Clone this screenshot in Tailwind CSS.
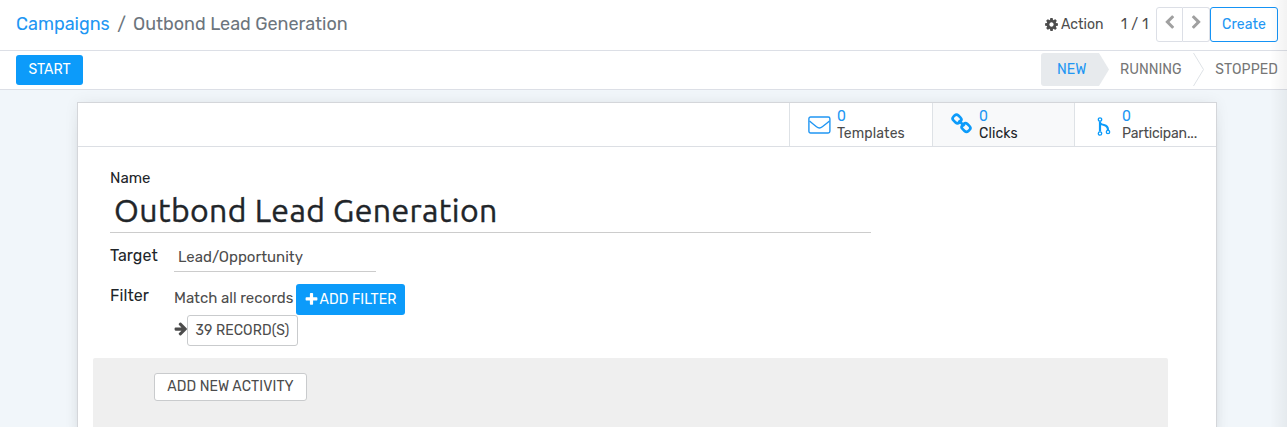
<!DOCTYPE html>
<html lang="en"><head><meta charset="utf-8"><title>Campaigns</title>
<script src="https://cdn.jsdelivr.net/npm/@tailwindcss/browser@4"></script></head>
<body class="w-[1287px] h-[427px] overflow-hidden bg-[#f1f6fa] font-[Rubik,Roboto,sans-serif] text-[14px] leading-[21px] text-[#4c4c4c] flex flex-col relative">
<header class="h-[51px] shrink-0 bg-white border-b border-[#dcdfe6] flex items-start justify-between pl-4 pr-[9px]">
  <nav class="flex text-[18px] leading-[27px] pt-[11px] text-[#6c757d]"><a class="text-[#2196f3] w-[94px] whitespace-nowrap">Campaigns</a><span class="w-[23px] text-center">/</span><span class="whitespace-nowrap">Outbond Lead Generation</span></nav>
  <div class="flex pt-[7px] h-[42px] items-stretch whitespace-nowrap">
    <div class="flex items-center w-[76px] gap-[2px]"><svg class="size-[15px]" viewBox="0 0 1792 1792" fill="currentColor"><path d="M1152 896q0-106-75-181t-181-75-181 75-75 181 75 181 181 75 181-75 75-181zm512-109v222q0 12-8 23t-20 13l-185 28q-19 54-39 91 35 50 107 138 10 12 10 25t-9 23q-27 37-99 108t-94 71q-12 0-26-9l-138-108q-44 23-91 38-16 136-29 186-7 28-36 28h-222q-14 0-24.5-8.5t-11.5-21.5l-28-184q-49-16-90-37l-141 107q-10 9-25 9-14 0-25-11-126-114-165-168-7-10-7-23 0-12 8-23 15-21 51-66.5t54-70.5q-27-50-41-99l-183-27q-13-2-21-12.5t-8-23.5v-222q0-12 8-23t19-13l186-28q14-46 39-92-40-57-107-138-10-12-10-24 0-10 9-23 26-36 98.5-107.5t94.5-71.5q13 0 26 10l138 107q44-23 91-38 16-136 29-186 7-28 36-28h222q14 0 24.5 8.5t11.5 21.5l28 184q49 16 90 37l142-107q9-9 24-9 13 0 25 10 129 119 165 170 7 8 7 22 0 12-8 23-15 21-51 66.5t-54 70.5q26 50 41 98l183 28q13 2 21 12.5t8 23.5z"/></svg><span>Action</span></div>
    <div class="flex items-center w-[36px] pl-px tracking-[0.4px]">1 / 1</div>
    <div class="w-[27px] border border-[#dcdfe6] rounded-l-[3px] flex justify-center items-center pb-1"><svg class="size-[15px]" viewBox="0 0 1792 1792" fill="#a0a0a0"><path d="M1427 301l-531 531 531 531q19 19 19 45t-19 45l-166 166q-19 19-45 19t-45-19l-742-742q-19-19-19-45t19-45l742-742q19-19 45-19t45 19l166 166q19 19 19 45t-19 45z"/></svg></div>
    <div class="w-[27px] border border-l-0 border-[#dcdfe6] rounded-r-[3px] flex justify-center items-center pb-1"><svg class="size-[15px]" viewBox="0 0 1792 1792" fill="#a0a0a0"><path d="M1363 877l-742 742q-19 19-45 19t-45-19l-166-166q-19-19-19-45t19-45l531-531-531-531q-19-19-19-45t19-45l166-166q19-19 45-19t45 19l742 742q19 19 19 45t-19 45z"/></svg></div>
    <button class="w-[68px] border border-[#1593f5] rounded-[3px] text-[#2196f3] tracking-[0.1px]">Create</button>
  </div>
</header>
<section class="h-[39px] shrink-0 bg-white border-b border-[#dcdfe6] flex justify-between pl-4 pr-[9px] whitespace-nowrap">
  <button class="mt-1 h-[30px] w-[67px] pb-[2px] rounded-[3px] bg-[#0c9bfa] text-white">START</button>
  <div class="flex h-[33px] mt-[2px] items-center text-[#767676]">
    <div class="relative w-[68px] h-full flex items-center pl-4 text-[#2196f3]"><svg class="absolute left-0 top-0" width="68" height="33"><path d="M3 0H58L68 16.500 58 33H3Q0 33 0 30V3Q0 0 3 0Z" fill="#e7eaed"/></svg><span class="relative">NEW</span></div>
    <span class="w-[84px] pl-[11px]">RUNNING</span>
    <svg class="w-[11px] h-[33px]" viewBox="0 0 11 33" fill="none" stroke="#dee2e6"><path d="M.5 0 10.500 16.500.5 33"/></svg>
    <span class="w-[74px] text-right tracking-[0.08px]">STOPPED</span>
  </div>
</section>
<main class="mt-3 ml-[77px] w-[1140px] h-[340px] shrink-0 bg-white border border-[#d4d6da] shadow-[0_5px_20px_-15px_rgba(0,0,0,0.4),0_0_14px_rgba(0,0,0,0.06)] flex flex-col">
  <div class="h-[44px] shrink-0 border-b border-[#dcdfe4] flex justify-end leading-[17px] whitespace-nowrap">
    <div class="w-[143px] border-l border-[#dee2e6] flex pl-[18px] pt-[5px]"><svg class="mt-[8px] mr-[6px]" width="23" height="19" viewBox="0 0 23 19" fill="none" stroke="#2196f3" stroke-width="1.400"><rect x=".9" y="1" width="21" height="16" rx="1.700"/><path d="M1.500 5Q5 8 8.500 10.800Q11.400 13.200 14.300 10.800Q18 8 21.500 5"/></svg><div><div class="text-[#2196f3]">0</div><div class="tracking-[0.1px]">Templates</div></div></div>
    <div class="w-[142px] border-l border-[#dee2e6] bg-[#f8f9fa] flex pl-[18px] pt-[5px]"><svg class="mt-[4px] mr-[7px]" width="21" height="22" viewBox="0 0 21 22" fill="none" stroke="#0c9bfa" stroke-width="2.600"><rect x="-4.200" y="-3.500" width="8.400" height="7" rx="2.700" transform="translate(6 7) rotate(45)"/><rect x="-4.200" y="-3.500" width="8.400" height="7" rx="2.700" transform="translate(15 15.500) rotate(45)"/><path d="M7.500 8.500 13.500 14"/></svg><div><div class="text-[#2196f3]">0</div><div class="text-[#212529] tracking-[0.12px]">Clicks</div></div></div>
    <div class="w-[142px] border-l border-[#dee2e6] flex pl-[21px] pt-[5px]"><svg class="mt-[9px] mr-[10px]" width="16" height="20" viewBox="0 0 16 20" fill="none" stroke="#0c9bfa" stroke-width="1.300"><circle cx="4" cy="2.500" r="1.700"/><circle cx="4" cy="16.500" r="1.700"/><circle cx="12" cy="15" r="1.700"/><path stroke-width="2.200" d="M4 4.500V14.500M4 6Q5 7.500 8 8Q12 9 12 13"/></svg><div><div class="text-[#2196f3]">0</div><div class="tracking-[-0.15px]">Participan...</div></div></div>
  </div>
  <div class="pl-8 text-[15px] text-[#212529] h-[211px] shrink-0 whitespace-nowrap">
    <div class="pt-[21px] h-[42px]">Name</div>
    <div class="w-[761px] h-[44px] border-b border-[#cccccc] pl-1 font-[Ubuntu,'Noto_Sans',sans-serif] text-[32px] leading-[43px] tracking-[0.4px] [-webkit-text-stroke:0.4px_#212529]">Outbond Lead Generation</div>
    <div class="flex h-[39px]"><div class="w-16 text-[16px] pt-3 tracking-[0.1px]">Target</div><div class="w-[202px] border-b border-[#cccccc] pl-1 pt-[14px] text-[#4c4c4c]">Lead/Opportunity</div></div>
    <div class="flex"><div class="w-16 text-[16px] pt-[13px] tracking-[0.1px]">Filter</div><div class="text-[#4c4c4c] pt-3">
      <div class="flex h-[31px]"><span class="w-[122px] pt-[4px]">Match all records</span><button class="w-[109px] h-[31px] rounded-[3px] bg-[#0c9bfa] text-white text-[14px] flex items-center justify-center"><svg class="size-[15px]" viewBox="0 0 1792 1792" fill="currentColor"><path d="M1600 736v192q0 40-28 68t-68 28h-416v416q0 40-28 68t-68 28h-192q-40 0-68-28t-28-68v-416h-416q-40 0-68-28t-28-68v-192q0-40 28-68t68-28h416v-416q0-40 28-68t68-28h192q40 0 68 28t28 68v416h416q40 0 68 28t28 68z"/></svg><span class="tracking-[0.1px]">ADD FILTER</span></button></div>
      <div class="flex h-[31px]"><svg class="w-[13px] h-[15px] mt-[6px]" viewBox="64 0 1536 1792" fill="currentColor"><path d="M1600 960q0 54-37 91l-651 651q-39 37-91 37-51 0-90-37l-75-75q-38-38-38-91t38-91l293-293h-704q-52 0-84.500-37.500t-32.500-90.500v-128q0-53 32.500-90.500t84.500-37.500h704l-293-294q-38-36-38-90t38-90l75-75q38-38 90-38 53 0 91 38l651 651q37 35 37 90z"/></svg><button class="w-[111px] h-[31px] border border-[#c9cbcd] rounded-[3px] text-[14px] tracking-[0.08px]">39 RECORD(S)</button></div>
    </div></div>
  </div>
  <div class="ml-[15px] w-[1075px] h-[90px] bg-[#efefef] rounded-t-[2px] pt-[15px] pl-[61px]"><button class="block w-[153px] h-[28px] bg-white border border-[#c9cbcd] rounded-[3px] text-[14px] leading-[24px] whitespace-nowrap tracking-[0.1px]">ADD NEW ACTIVITY</button></div>
</main>
<div class="absolute right-0 top-0 w-[17px] h-full bg-linear-to-r from-black/0 to-black/5"></div>
</body></html>
